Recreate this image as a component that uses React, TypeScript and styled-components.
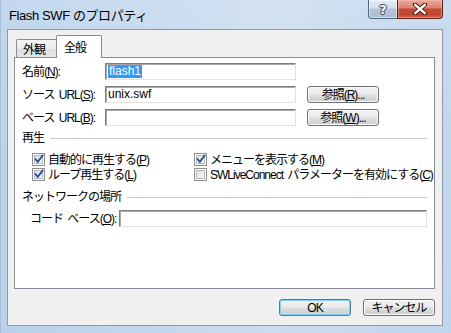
import React from "react";
import styled, { createGlobalStyle, css } from "styled-components";

const Global = createGlobalStyle`
  html, body { margin: 0; padding: 0; }
  body {
    width: 451px; height: 333px; overflow: hidden;
    font-family: "Liberation Sans", "Noto Sans CJK JP", sans-serif;
    font-size: 12px; color: #000;
    letter-spacing: -1px;
    word-spacing: 2px;
  }
  * { box-sizing: border-box; }
`;

const Window = styled.div`
  width: 451px;
  height: 333px;
  display: flex;
  flex-direction: column;
  padding: 0 8px 7px 6px;
  background:
    linear-gradient(to right, rgba(255,255,255,0.0) 0%, rgba(255,255,255,0.25) 60%, rgba(255,255,255,0.1) 100%),
    linear-gradient(to bottom, #c3d8ee 0%, #bcd3eb 40%, #b9d1ea 100%);
  border-left: 1px solid #a9bfd8;
`;

const TitleBar = styled.div`
  height: 29px;
  display: flex;
  align-items: flex-start;
  justify-content: space-between;
  flex-shrink: 0;
`;

const Title = styled.div`
  margin-top: 8px;
  padding-left: 2px;
  font-size: 13px;
  line-height: 15px;
  letter-spacing: -0.4px;
  word-spacing: 0;
  color: #000;
`;

const Controls = styled.div`
  display: flex;
  height: 19px;
`;

const CaptionButton = styled.div<{ $kind: "help" | "close" }>`
  height: 19px;
  display: flex;
  align-items: center;
  justify-content: center;
  border: 1px solid #56667a;
  border-top: none;
  ${(p) =>
    p.$kind === "help"
      ? css`
          width: 29px;
          border-right: none;
          border-bottom-left-radius: 4px;
          background: linear-gradient(to bottom, #e4ecf5 0%, #d3dfec 45%, #b4c5d9 50%, #a9bdd4 100%);
          box-shadow: inset 0 0 0 1px rgba(255,255,255,0.5);
        `
      : css`
          width: 46px;
          border-color: #5e1d15;
          border-bottom-right-radius: 4px;
          background: linear-gradient(to bottom, #e9a99c 0%, #d9806e 45%, #c24a34 50%, #c0462e 80%, #d2614a 100%);
          box-shadow: inset 0 0 0 1px rgba(255,200,190,0.45);
        `}
`;

const HelpGlyph = styled.span`
  font-family: "DejaVu Sans", sans-serif;
  font-weight: bold;
  font-size: 13px;
  line-height: 13px;
  letter-spacing: 0;
  color: #fff;
  text-shadow: 0 0 1px #3a4658, 0 0 1px #3a4658, 1px 0 0 #3a4658, -1px 0 0 #3a4658, 0 1px 0 #3a4658, 0 -1px 0 #3a4658;
`;

const Client = styled.div`
  flex: 1;
  display: flex;
  flex-direction: column;
  border: 1px solid #8e9aa8;
  background: #f0f0f0;
  padding: 5px 7px 9px 6px;
`;

const TabStrip = styled.div`
  height: 22px;
  display: flex;
  align-items: flex-end;
  padding-left: 2px;
  flex-shrink: 0;
  position: relative;
  z-index: 1;
`;

const Tab = styled.div<{ $active?: boolean }>`
  border: 1px solid #898c95;
  border-bottom: none;
  display: flex;
  align-items: center;
  font-size: 12px;
  ${(p) =>
    p.$active
      ? css`
          height: 23px;
          width: 46px;
          margin-bottom: -1px;
          margin-left: -1px;
          background: #fff;
          padding: 0 0 2px 7px;
          border-radius: 2px 2px 0 0;
        `
      : css`
          height: 18px;
          width: 41px;
          background: linear-gradient(to bottom, #f4f4f4 0%, #ebebeb 50%, #dedede 51%, #e6e6e6 100%);
          padding: 0 0 0 6px;
          border-radius: 2px 0 0 0;
        `}
`;

const Panel = styled.div`
  height: 232px;
  flex-shrink: 0;
  border: 1px solid #898c95;
  background: #fff;
  padding: 5px 7px 0 7px;
  display: flex;
  flex-direction: column;
  overflow: hidden;
`;

const FieldGrid = styled.div`
  display: grid;
  grid-template-columns: 72px 191px 72px;
  grid-auto-rows: 17px;
  column-gap: 11px;
  row-gap: 6px;
  align-items: center;
`;

const Label = styled.div`
  white-space: nowrap;
  line-height: 14px;
`;

const U = styled.span`
  text-decoration: underline;
  text-underline-offset: 1px;
`;

const TextBox = styled.div`
  height: 17px;
  border: 1px solid;
  border-color: #7d7d7d #dfdfdf #e3e3e3 #7d7d7d;
  box-shadow: inset 1px 1px 0 #a9a9a9;
  background: #fff;
  padding: 1px 0 0 2px;
  line-height: 13px;
  letter-spacing: 0;
  word-spacing: 0;
  white-space: nowrap;
  overflow: hidden;
`;

const Selected = styled.span`
  background: #3399ff;
  color: #fff;
  display: inline-block;
  padding: 0 1px;
  line-height: 13px;
`;

const Button = styled.div<{ $default?: boolean }>`
  height: 17px;
  width: 72px;
  display: flex;
  align-items: center;
  justify-content: center;
  border: 1px solid #707070;
  border-radius: 3px;
  background: linear-gradient(to bottom, #f2f2f2 0%, #ebebeb 48%, #dddddd 52%, #cfcfcf 100%);
  box-shadow: inset 0 0 0 1px #fcfcfc;
  font-size: 12px;
  line-height: 14px;
  white-space: nowrap;
  ${(p) =>
    p.$default &&
    css`
      border-color: #3c7fb1;
      box-shadow: inset 0 0 0 1px #7fd3f5;
    `}
`;

const SectionHeader = styled.div<{ $gap: number }>`
  margin-top: ${(p) => p.$gap}px;
  height: 14px;
  display: flex;
  align-items: center;
  gap: 6px;
  line-height: 14px;
  white-space: nowrap;
`;

const Rule = styled.div`
  flex: 1;
  height: 1px;
  background: #c8c8c8;
  box-shadow: 0 1px 0 #fff;
`;

const CheckGrid = styled.div`
  margin-top: 7px;
  padding-left: 10px;
  display: grid;
  grid-template-columns: 162px 1fr;
  grid-auto-rows: 15px;
  align-items: center;
`;

const CheckRow = styled.div`
  display: flex;
  align-items: center;
  gap: 3px;
  white-space: nowrap;
  line-height: 14px;
`;

const Box = styled.div`
  width: 13px;
  height: 13px;
  flex-shrink: 0;
  border: 1px solid #8e8f8f;
  background: #fff;
  padding: 1px;
  display: flex;
`;

const BoxInner = styled.div`
  flex: 1;
  border: 1px solid #b7b9bb;
  background: linear-gradient(135deg, #dcdcdc 0%, #f0f0f0 60%, #fbfbfb 100%);
  position: relative;
`;

const Tick = styled.svg`
  position: absolute;
  left: -1px;
  top: -2px;
`;

const CodeRow = styled.div`
  margin-top: 6px;
  padding-left: 8px;
  display: flex;
  align-items: center;
`;

const CodeLabel = styled.div`
  width: 89px;
  flex-shrink: 0;
  white-space: nowrap;
  line-height: 14px;
`;

const CodeBox = styled(TextBox)`
  flex: 1;
`;

const Footer = styled.div`
  margin-top: 10px;
  display: flex;
  justify-content: flex-end;
  gap: 12px;
`;

function Check({ checked, children }: { checked?: boolean; children: React.ReactNode }) {
  return (
    <CheckRow>
      <Box>
        <BoxInner>
          {checked && (
            <Tick width="10" height="10" viewBox="0 0 10 10">
              <path d="M1.5 5.2 L3.8 7.8 L8.6 1.6" fill="none" stroke="#2a4aa0" strokeWidth="1.8" strokeLinecap="square" />
            </Tick>
          )}
        </BoxInner>
      </Box>
      <span>{children}</span>
    </CheckRow>
  );
}

export default function App() {
  return (
    <>
      <Global />
      <Window>
        <TitleBar>
          <Title>Flash SWF のプロパティ</Title>
          <Controls>
            <CaptionButton $kind="help">
              <HelpGlyph>?</HelpGlyph>
            </CaptionButton>
            <CaptionButton $kind="close">
              <svg width="14" height="12" viewBox="0 0 14 12">
                <path d="M2 1.5 L12 10.5 M12 1.5 L2 10.5" stroke="#4a1a12" strokeWidth="4.2" strokeLinecap="round" />
                <path d="M2.2 1.8 L11.8 10.2 M11.8 1.8 L2.2 10.2" stroke="#fff" strokeWidth="2.4" strokeLinecap="round" />
              </svg>
            </CaptionButton>
          </Controls>
        </TitleBar>
        <Client>
          <TabStrip>
            <Tab>外観</Tab>
            <Tab $active>全般</Tab>
          </TabStrip>
          <Panel>
            <FieldGrid>
              <Label>
                名前(<U>N</U>):
              </Label>
              <TextBox>
                <Selected>flash1</Selected>
              </TextBox>
              <div />
              <Label>
                ソース URL(<U>S</U>):
              </Label>
              <TextBox>unix.swf</TextBox>
              <Button>
                参照(<U>R</U>)...
              </Button>
              <Label>
                ベース URL(<U>B</U>):
              </Label>
              <TextBox />
              <Button>
                参照(<U>W</U>)...
              </Button>
            </FieldGrid>
            <SectionHeader $gap={5}>
              <span>再生</span>
              <Rule />
            </SectionHeader>
            <CheckGrid>
              <Check checked>
                自動的に再生する(<U>P</U>)
              </Check>
              <Check checked>
                メニューを表示する(<U>M</U>)
              </Check>
              <Check checked>
                ループ再生する(<U>L</U>)
              </Check>
              <Check>
                SWLiveConnect パラメーターを有効にする(<U>C</U>)
              </Check>
            </CheckGrid>
            <SectionHeader $gap={8}>
              <span>ネットワークの場所</span>
              <Rule />
            </SectionHeader>
            <CodeRow>
              <CodeLabel>
                コード ベース(<U>O</U>):
              </CodeLabel>
              <CodeBox />
            </CodeRow>
          </Panel>
          <Footer>
            <Button $default>OK</Button>
            <Button>キャンセル</Button>
          </Footer>
        </Client>
      </Window>
    </>
  );
}
